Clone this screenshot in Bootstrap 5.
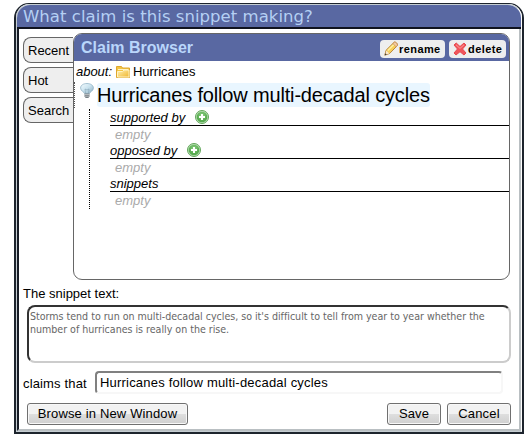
<!DOCTYPE html>
<html lang="en">
<head>
<meta charset="utf-8">
<title>Claim Browser</title>
<link href="https://cdn.jsdelivr.net/npm/bootstrap@5.3.0/dist/css/bootstrap.min.css" rel="stylesheet">
<style>
body{font:13px/15px "Liberation Sans",Arial,sans-serif;color:#000;background:#fff;overflow:hidden}
.dialog-frame{width:510px;height:431px;margin:3px 0 0 14px;border:solid #1d242d;border-width:1px 2px 2px;border-radius:15px 15px 0 0;background:#fff}
.dialog-inner{height:428px;border:1px solid #c5cdd2;border-right-color:#fff;border-radius:14px 14px 0 0}
.dialog-title{height:24px;flex:none;background:#5968a2;color:#b5d0f4;border-bottom:2px solid #10131f;border-radius:13px 13px 0 0;font:16.5px/23px "DejaVu Sans",Verdana,sans-serif;padding-left:6px;letter-spacing:.04px}
.dialog-content{border:2px solid #b9bfc2;border-top:0;border-left-color:#171c26;padding:4px 8px 0 4px}
.side-tabs{width:50px;gap:4px;padding-top:4px}
.side-tab{height:26px;border:1px solid #666;border-right:0;border-radius:8px 0 0 8px;background:#eee;padding:5px 0 0 4px}
.browser-panel{width:437px;height:247px;border:1px solid #666;border-radius:9px;overflow:hidden}
.browser-head{height:27px;background:#5968a2;padding:0 3px 0 7px}
.browser-head h1{font:bold 16px/26px "Liberation Sans",Arial,sans-serif;color:#b9d6fb}
.tool-btn{height:18px;margin-top:2px;background:#eee;border:0;border-radius:4px;font:bold 11px/18px "Liberation Sans",Arial,sans-serif;letter-spacing:.42px;color:#000;padding:0}
.about-line{height:21px;padding:3px 0 0 2px;letter-spacing:-.03px}
.claim-line{height:26px;border-left:1px dotted #555;padding:1px 0 0 5px}
.claim-name{height:24px;font-size:20px;line-height:25px;letter-spacing:-.165px;background:#e9f6ff;border-radius:3px;width:333px;white-space:nowrap}
.tree{margin-left:15px;height:100px;border-left:1px dotted #000;padding-left:20px;margin-top:1px}
.tree-head{height:17px;border-bottom:1px solid #000;font-style:italic;line-height:18px}
.tree-empty{height:16px;padding-left:5px;color:#aaa;font-style:italic;line-height:17px}
.snippet-label{margin-top:6px;height:15px}
.snippet-box{height:58px;margin:4px 0 0 4px;width:484px;border:2px solid;border-color:#333 #ccc #ccc #333;border-radius:8px;padding:3px 0 0 1px;color:#666;font:10.6px/13px "DejaVu Sans Condensed","DejaVu Sans",sans-serif;font-stretch:condensed;white-space:nowrap;letter-spacing:-.015px}
.claims-label{width:72px;padding-top:2px;letter-spacing:.15px}
.claim-input{width:408px;height:23px;border:2px solid;border-color:#808080 #f7f7f7 #f7f7f7 #808080;border-radius:4px;padding:0 3px;font:13px/19px "Liberation Sans",Arial,sans-serif;letter-spacing:.2px;color:#000;background:#fff;outline:0}
.push-btn{height:22px;border:1px solid #707070;border-radius:3px;background:linear-gradient(#f2f2f2 0 48%,#dedede 52%,#cfcfcf);box-shadow:inset 0 0 0 1px #f8f8f8;font:13px/20px "Liberation Sans",Arial,sans-serif;letter-spacing:.15px;color:#000;padding:0}
</style>
<script src="https://cdn.jsdelivr.net/npm/bootstrap@5.3.0/dist/js/bootstrap.bundle.min.js"></script>
</head>
<body>
<svg width="0" height="0" class="position-absolute">
<defs>
<radialGradient id="greenFill" cy=".35"><stop offset="0" stop-color="#8bcf82"/><stop offset="1" stop-color="#58ab50"/></radialGradient>
<linearGradient id="bulbFill" x2="1" y2="1"><stop stop-color="#f6fcff"/><stop offset=".5" stop-color="#c9e2ee"/><stop offset="1" stop-color="#88aabd"/></linearGradient>
<linearGradient id="folderFill" x2="1" y2="1"><stop stop-color="#fff3b8"/><stop offset="1" stop-color="#f0b52c"/></linearGradient>
<symbol id="plus" viewBox="0 0 14 14"><circle cx="7" cy="7" r="6.5" fill="#b9dfb4" stroke="#62a65b"/><circle cx="7" cy="7" r="5.3" fill="url(#greenFill)"/><path d="M7 4v6M4 7h6" stroke="#fff" stroke-width="2"/></symbol>
</defs>
</svg>
<div class="dialog-frame">
<div class="dialog-inner d-flex flex-column">
<div class="dialog-title text-nowrap">What claim is this snippet making?</div>
<div class="dialog-content flex-grow-1">
<div class="d-flex">
<div class="side-tabs d-flex flex-column">
<div class="side-tab">Recent</div><div class="side-tab">Hot</div><div class="side-tab">Search</div>
</div>
<section class="browser-panel">
<div class="browser-head d-flex align-items-center">
<h1 class="m-0 me-auto">Claim Browser</h1>
<button class="tool-btn d-flex align-items-center me-1" style="width:65px"><svg class="ms-1" width="15" height="15" viewBox="0 0 15 15"><path d="M.8 14.2l1.3-5L10 1.4c1-1.4 4.400 1.500 3.300 3.200L5.600 12.500z" fill="#f7cf5a" stroke="#b9863a"/><path d="M3.800 9.500l6.900-6.800" stroke="#fff0a0" stroke-width="1.600"/><path d="M10 1.500c1-1.200 4.200 1.500 3.300 3l-1.200 1.200L8.900 2.600z" fill="#f2c9a4" stroke="#c98f58" stroke-width=".7"/><path d="M2.300 9.600l3 2.800-4 1.400z" fill="#f9e6c9"/><path d="M.8 14.200l.5-2 1.500 1.400z" fill="#333"/></svg>rename</button>
<button class="tool-btn d-flex align-items-center" style="width:57px"><svg style="margin:0 1px 0 4px" width="14" height="14" viewBox="0 0 14 14"><path d="M1 3l2.200-2L7 4.500 11 1l2 2-3.500 4 3.500 4-2 2-4-3.300L3 13l-2-2 3.500-4z" fill="#f0555b" stroke="#e8484e" stroke-linejoin="round"/><path d="M3 2.800l4 3.600 4-3.600" fill="none" stroke="#ff9a98"/></svg>delete</button>
</div>
<div class="about-line d-flex"><i>about:</i><svg style="margin:1px 3px 0 4px" width="14" height="13" viewBox="0 0 14 13"><path d="M.5 12.500V1.500h5l1 1.500h7v9.500z" fill="#f3c544" stroke="#dfa72e"/><path d="M2 4.500h10M1.500 6.500h5l1.500-1.500h5v7H1.500z" fill="url(#folderFill)" stroke="#fff3c4"/></svg>Hurricanes</div>
<div class="claim-line d-flex"><svg width="14" height="16" viewBox="0 0 14 16" style="margin-right:3px"><path d="M4.500 10.500C4.300 9 .6 8 .6 5 .6 2.200 3.500.500 7 .500s6.400 1.700 6.400 4.500c0 3-3.700 4-3.900 5.500z" fill="url(#bulbFill)" stroke="#93b5c8" stroke-width=".8"/><path d="M5.500 10L5 6l2 1 2-1-.5 4" fill="none" stroke="#86a5b5" stroke-width=".6"/><path d="M4.500 10.500h5v3L8.300 15H5.700L4.500 13.500z" fill="#777f84"/><path d="M4.500 11.500h5M4.500 13.200h5" stroke="#d2d7d9" stroke-width=".7"/></svg><div class="claim-name">Hurricanes follow multi-decadal cycles</div></div>
<div class="tree">
<div class="tree-head d-flex">supported by<svg style="margin:1px 0 0 10px" width="14" height="14"><use href="#plus"/></svg></div><div class="tree-empty">empty</div>
<div class="tree-head d-flex">opposed by<svg style="margin:1px 0 0 10px" width="14" height="14"><use href="#plus"/></svg></div><div class="tree-empty">empty</div>
<div class="tree-head">snippets</div><div class="tree-empty">empty</div>
</div>
</section>
</div>
<div class="snippet-label">The snippet text:</div>
<div class="snippet-box">Storms tend to run on multi-decadal cycles, so it's difficult to tell from year to year whether the<br>number of hurricanes is really on the rise.</div>
<div class="d-flex align-items-center" style="margin-top:8px"><label for="claimText" class="claims-label">claims that</label><input id="claimText" class="claim-input" value="Hurricanes follow multi-decadal cycles"></div>
<div class="d-flex" style="margin:9px 0 0 4px"><button class="push-btn me-auto" style="width:161px">Browse in New Window</button><button class="push-btn" style="width:54px;margin-right:6px">Save</button><button class="push-btn" style="width:64px">Cancel</button></div>
</div>
</div>
</div>
</body>
</html>
